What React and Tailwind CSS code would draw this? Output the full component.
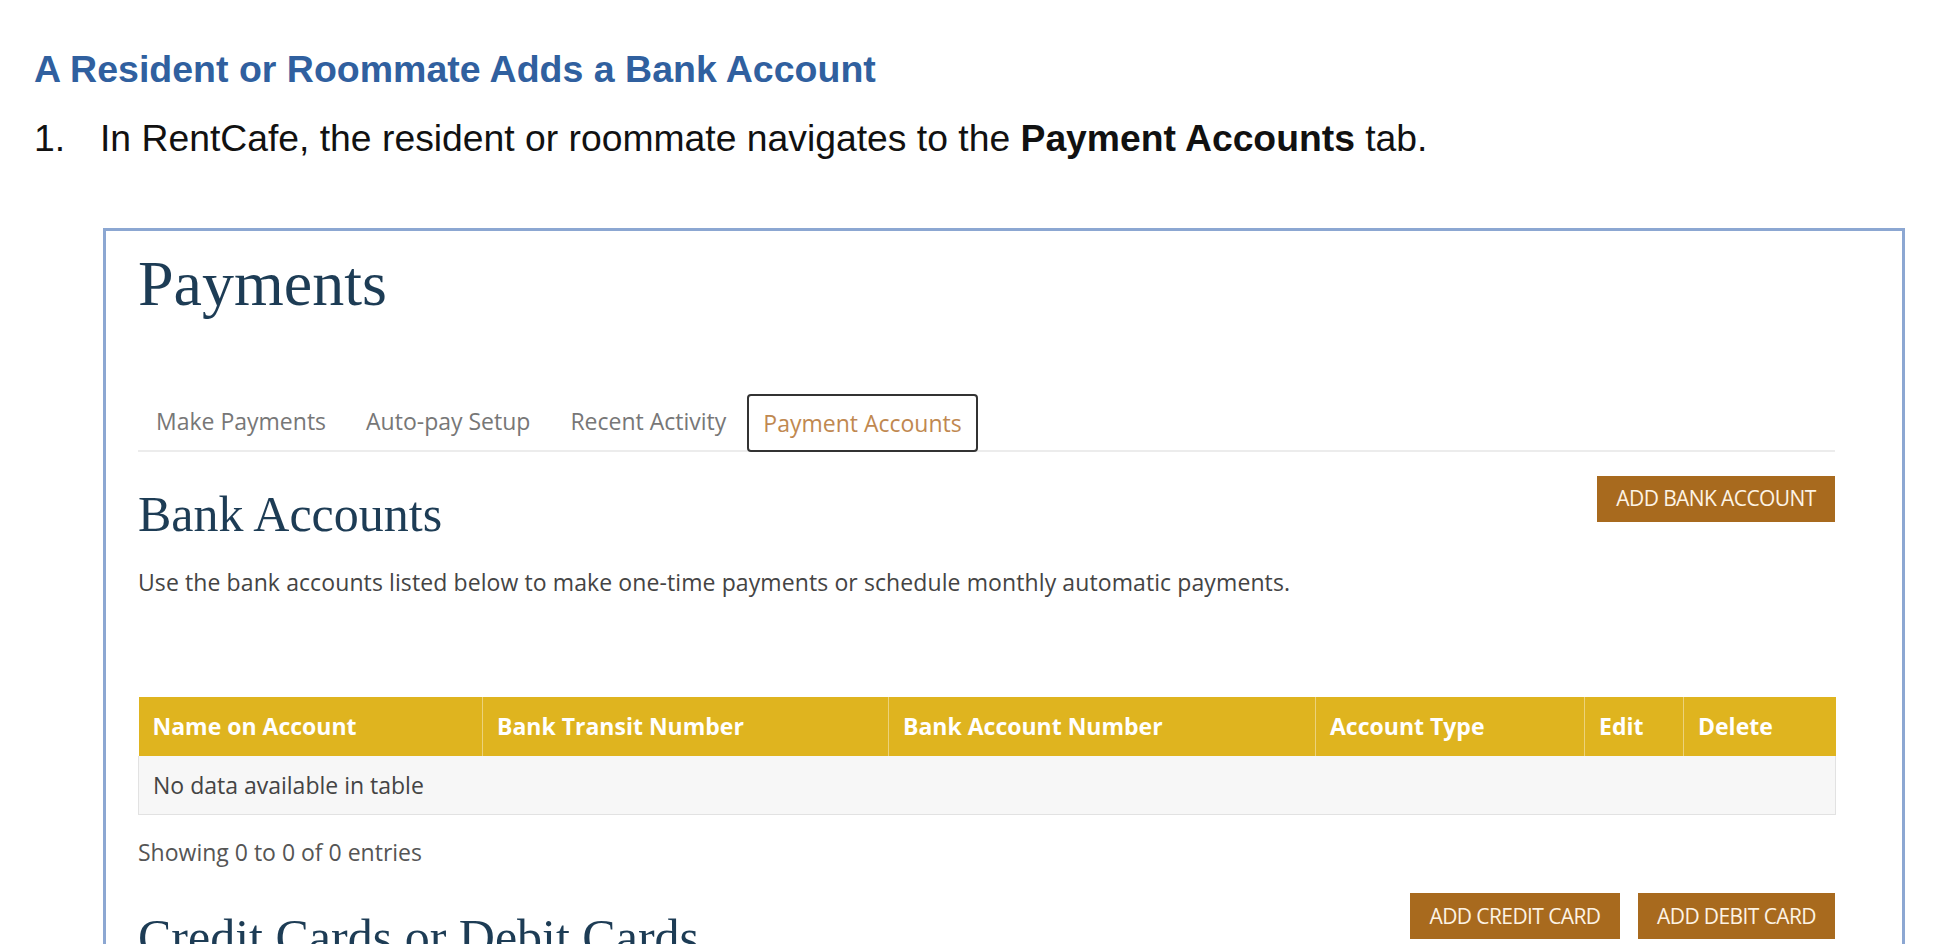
import React from 'react';

const tabs = ['Make Payments', 'Auto-pay Setup', 'Recent Activity'];

const columns = [
  { label: 'Name on Account', width: 'w-[344px]' },
  { label: 'Bank Transit Number', width: 'w-[406px]' },
  { label: 'Bank Account Number', width: 'w-[427px]' },
  { label: 'Account Type', width: 'w-[269px]' },
  { label: 'Edit', width: 'w-[99px]' },
  { label: 'Delete', width: 'w-[152px]' },
];

const BrownButton = ({ children, className = '' }) => (
  <button className={`h-[46px] bg-[#a86a1e] text-[#fdf3e4] uppercase text-[21px] tracking-[-0.6px] font-['Open_Sans'] ${className}`}>
    {children}
  </button>
);

const App = () => {
  return (
    <div className="w-[1952px] h-[944px] overflow-hidden bg-white font-['Liberation_Sans',Arial,sans-serif]">
      <div className="pt-[51px] pl-[34px]">
        <h2 className="text-[37.5px] leading-none font-bold text-[#30609f]">A Resident or Roommate Adds a Bank Account</h2>
        <p className="mt-[31px] flex text-[37.3px] leading-none text-[#111]">
          <span className="w-[66px]">1.</span>
          <span>In RentCafe, the resident or roommate navigates to the <b>Payment Accounts</b> tab.</span>
        </p>
      </div>

      <div className="ml-[103px] mt-[71px] w-[1802px] h-[760px] border-[3px] border-[#8ca7d2] pl-[32px] pr-[67px] pt-[21px] font-['Open_Sans',sans-serif]">
        <h1 className="font-['Liberation_Serif',serif] text-[64px] leading-none text-[#1d3c55]">Payments</h1>

        <div className="mt-[76px] flex items-end border-b-2 border-[#ececec] pl-[2px]">
          {tabs.map((t, i) => (
            <div key={t} className={`h-[58px] flex items-center px-4 text-[23px] text-[#777] ${i < 2 ? 'mr-[8px]' : 'mr-[5px]'}`}>{t}</div>
          ))}
          <div className="h-[58px] -mb-[2px] flex items-center px-[14px] border-2 border-[#333] rounded-[4px] text-[23px] text-[#c08850]">
            Payment Accounts
          </div>
        </div>

        <div className="flex justify-between items-start">
          <h3 className="mt-[37px] font-['Liberation_Serif',serif] text-[50px] leading-none text-[#1d3c55]">Bank Accounts</h3>
          <BrownButton className="mt-[24px] w-[238px]">Add Bank Account</BrownButton>
        </div>

        <p className="mt-[32px] text-[23px] leading-none tracking-[0.1px] text-[#444]">
          Use the bank accounts listed below to make one-time payments or schedule monthly automatic payments.
        </p>

        <table className="mt-[103px] w-[1697px] table-fixed border-collapse">
          <thead>
            <tr className="h-[59px] bg-[#dfb41f]">
              {columns.map((c, i) => (
                <th key={c.label} className={`${c.width} text-left font-bold text-white text-[23px] px-[14px] ${i > 0 ? 'border-l border-[#ecd27a]' : ''}`}>
                  {c.label}
                </th>
              ))}
            </tr>
          </thead>
          <tbody>
            <tr className="h-[59px] bg-[#f7f7f7]">
              <td colSpan={6} className="px-[14px] text-[23px] text-[#444] border border-t-0 border-[#e2e2e2]">No data available in table</td>
            </tr>
          </tbody>
        </table>

        <p className="mt-[26px] text-[23px] leading-none text-[#555]">Showing 0 to 0 of 0 entries</p>

        <div className="flex justify-between items-start">
          <h3 className="mt-[48px] font-['Liberation_Serif',serif] text-[50px] leading-none text-[#1d3c55]">Credit Cards or Debit Cards</h3>
          <div className="mt-[29px] flex gap-[18px]">
            <BrownButton className="w-[210px]">Add Credit Card</BrownButton>
            <BrownButton className="w-[197px]">Add Debit Card</BrownButton>
          </div>
        </div>
      </div>
    </div>
  );
};

export default App;
